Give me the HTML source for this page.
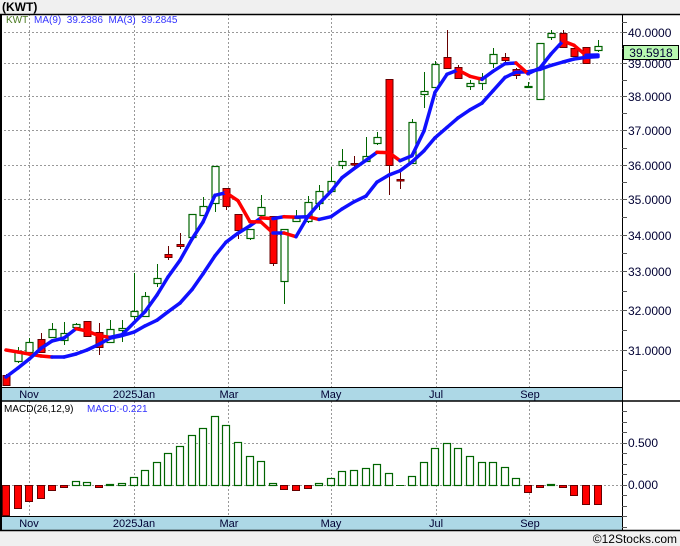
<!DOCTYPE html>
<html><head><meta charset="utf-8"><style>
html,body{margin:0;padding:0;background:#f0f0f0;}
body{width:680px;height:546px;overflow:hidden;position:relative;font-family:"Liberation Sans",sans-serif;}
svg{position:absolute;left:0;top:0;}
</style></head><body>
<svg id="s" width="680" height="546" xmlns="http://www.w3.org/2000/svg" font-family="Liberation Sans, sans-serif"></svg>
<script>
var s=document.getElementById('s');var h='';
function r(x,y,w,hh,f,st,sw){h+='<rect x="'+x+'" y="'+y+'" width="'+w+'" height="'+hh+'" fill="'+f+'"'+(st?' stroke="'+st+'" stroke-width="'+(sw||1)+'"':'')+'/>';}
function l(x1,y1,x2,y2,c,w,d){h+='<line x1="'+x1+'" y1="'+y1+'" x2="'+x2+'" y2="'+y2+'" stroke="'+c+'" stroke-width="'+(w||1)+'"'+(d?' stroke-dasharray="'+d+'"':'')+'/>';}
function t(x,y,txt,c,sz,a,wt){h+='<text x="'+x+'" y="'+y+'" fill="'+c+'" font-size="'+sz+'"'+(a?' text-anchor="'+a+'"':'')+(wt?' font-weight="'+wt+'"':'')+'>'+txt+'</text>';}
r(0,14,680,516,'#fff');
r(0,387,622,14,'#add8e6');r(0,516,622,14,'#add8e6');
var gx=[29,134,228,331,436,529];
var py=[[40,32],[39,63],[38,96],[37,130],[36,165],[35,199],[34,235],[33,271],[32,310],[31,350]];
py.forEach(function(p){l(0,p[1]+.5,622,p[1]+.5,'#999',1,'2,2');});
gx.forEach(function(x){l(x+.5,14,x+.5,387,'#999',1,'2,2');l(x+.5,401,x+.5,516,'#999',1,'2,2');});
l(0,443.5,622,443.5,'#999',1,'2,2');l(0,485.5,622,485.5,'#999',1,'2,2');
l(0,14.5,680,14.5,'#000',1.5);l(1,14,1,530,'#000',2);l(622.5,14,622.5,530,'#000',1);
l(0,387.5,622,387.5,'#000',1);l(0,401,680,401,'#000',1.5);l(0,516.5,622,516.5,'#000',1);l(0,530.5,680,530.5,'#000',1.5);
for(var i=0;i<py.length;i++){var y=py[i][1];l(622,y+.5,627,y+.5,'#555');
 if(i<py.length-1){var m=Math.round((y+py[i+1][1])/2);l(622,m+.5,627,m+.5,'#555');}
 t(628,y+5,py[i][0].toFixed(4),'#000033',12);}
l(622,22.5,627,22.5,'#555');l(622,370.5,627,370.5,'#555');
for(var y=411;y<530;y+=10.5){l(622,Math.round(y)+.5,627,Math.round(y)+.5,'#555');}
t(628,447,'0.500','#000033',12);t(628,489,'0.000','#000033',12);
var dl=[['Nov',29],['2025Jan',134],['Mar',229],['May',331],['Jul',436],['Sep',530]];
dl.forEach(function(d){t(d[1],398,d[0],'#000033',11,'middle');t(d[1],527,d[0],'#000033',11,'middle');});
var c=[['r',375,385,374,385],['g',351,361,347,363],['g',342,352,338,354],['r',339,352,333,352],['g',329,337,323,337],['g',333,340,322,345],['g',324,327,323,328],['r',321,336,321,336],['r',332,347,323,355],['g',329,342,320,342],['g',328,330,320,342],
['g',311,316,273,320],['g',296,316,292,316],['g',278,283,264,287],['d',254,257,246,260],['d',244,246,233,249],['g',214,237,214,237],['g',206,215,197,215],['g',166,203,166,212],['r',188,206,188,210],['r',214,230,214,239],['g',229,238,229,240],['g',207,215,195,215],['r',216,263,216,266],['g',229,281,229,304],['g',218,221,210,222],['g',202,221,196,223],
['g',191,203,185,210],['g',181,191,167,192],['g',161,165,149,169],['d',163,164,156,167],['g',156,161,137,161],['g',137,143,132,145],['r',79,165,79,195],['d',179,180,170,189],['g',122,163,119,163],['g',91,94,72,108],['g',64,87,61,87],['r',57,68,30,68],
['r',67,78,65,79],['g',83,86,80,90],['g',77,83,73,90],['g',54,63,48,68],['r',57,60,53,62],['r',69,75,68,79],['g',86,87,82,87],['g',43,99,43,99],['g',33,37,30,40],['r',33,47,30,47],['r',48,56,48,56],['r',47,63,47,64],['g',46,50,40,52]];
var X=function(i){return Math.round(6+11.6*i);};
var closes=[];
c.forEach(function(k,i){var x=X(i);var g=k[0]=='g';var wc=g?'#006400':'#600';
 l(x+.5,k[3],x+.5,k[4],wc,1);
 if(g){r(x-3,k[1]+.5,7,Math.max(1,k[2]-k[1]),'#fff','#006400',1.2);}
 else{r(x-3,k[1]+.5,7,Math.max(1.5,k[2]-k[1]),'#f00','#600',1);}
 closes.push(g?k[1]:k[2]);});
function ma(n,pre){var a=[];for(var i=0;i<c.length;i++){if(i<pre.length)a.push(pre[i]);else{var sm=0;for(var j=i-n+1;j<=i;j++)sm+=closes[j];a.push(sm/n);}}return a;}
var m9=ma(9,[350,352,354,356,357,357,354,350]),m3=ma(3,[377,368]);
function drawMA(a){for(var i=1;i<a.length;i++){var col=a[i]>a[i-1]+0.3?'#ff0000':'#1010ff';
 h+='<line x1="'+X(i-1)+'" y1="'+a[i-1].toFixed(1)+'" x2="'+X(i)+'" y2="'+a[i].toFixed(1)+'" stroke="'+col+'" stroke-width="3.5" stroke-linecap="round"/>';}}
drawMA(m9);drawMA(m3);
var md=[515,508,501,498,490,487,481,482,487,484,483,477,470,462,453,446,435,428,416,425,442,456,461,483,489,490,488,483,478,471,470,468,464,473,485,476,462,448,443,448,456,462,462,467,478,492,487,484,487,495,504,504];
md.forEach(function(v,i){var x=X(i);if(v<485){r(x-3.5,v+.5,7,485-v,'#fff','#006400',1.2);}else if(v>485){r(x-3.5,485.5,7,v-485,'#f00','#600',1);}else{l(x-4,485.5,x+4,485.5,'#006400',1);}});
t(2,11,'(KWT)','#000',12,null,'bold');
t(6,23,'KWT','#4a7a20',10);t(34,23,'MA(9)&#160;&#160;39.2386&#160;&#160;MA(3)&#160;&#160;39.2845','#3333ff',10);
t(4,412,'MACD(26,12,9)','#000',10);t(87,412,'MACD:-0.221','#3333ff',10);
r(623.5,45.5,55,14,'#b8f8b0','#000',1);t(651,57,'39.5918','#000033',12,'middle');
t(677,543,'©12Stocks.com','#000',12,'end');
s.innerHTML=h;
</script>
</body></html>
